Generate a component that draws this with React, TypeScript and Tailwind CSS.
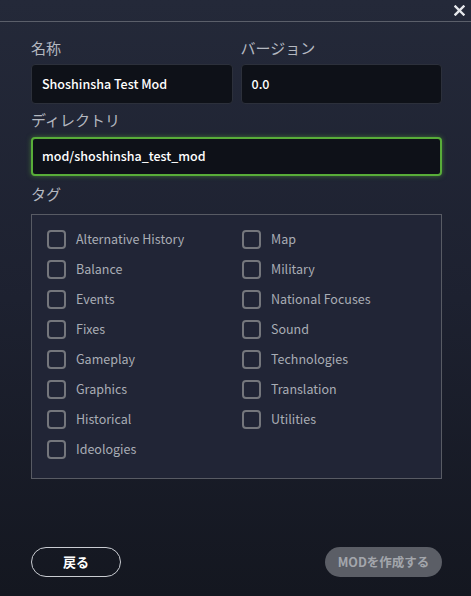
import React from "react";

const left = ["Alternative History", "Balance", "Events", "Fixes", "Gameplay", "Graphics", "Historical", "Ideologies"];
const right = ["Map", "Military", "National Focuses", "Sound", "Technologies", "Translation", "Utilities"];

function Tag({ label }: { label: string }) {
  return (
    <div className="flex items-center h-[30px]">
      <div className="w-[19px] h-[19px] rounded-[4px] border-2 border-[#74767c] shrink-0" />
      <span className="ml-[10px] text-[12.5px] text-[#a9adb5] leading-none">{label}</span>
    </div>
  );
}

export default function App() {
  return (
    <div
      className="w-[471px] h-[596px] relative overflow-hidden bg-[linear-gradient(180deg,#242939_0%,#1d2130_50%,#141720_100%)]"
      style={{ fontFamily: '"Noto Sans CJK JP", "Noto Sans", sans-serif' }}
    >
      <div className="h-[22px] border-b border-[#5b5f6a] flex justify-end items-center pr-[6px]">
        <svg width="11" height="11" viewBox="0 0 11 11">
          <path d="M1.5 1.5 L9.5 9.5 M9.5 1.5 L1.5 9.5" stroke="#e6e8ec" strokeWidth="2.4" strokeLinecap="square" />
        </svg>
      </div>
      <div className="pl-[31px] pr-[29px] pt-[14px] flex flex-col">
        <div className="flex gap-[8px]">
          <div className="flex-1 flex flex-col">
            <div className="text-[15px] text-[#b4b8c0] h-[23px] leading-[23px]">名称</div>
            <div className="mt-[5px] h-[40px] rounded-[4px] bg-[#0e1118] border border-[#2c303b] flex items-center pl-[10px] text-[12.5px] font-medium text-white">
              Shoshinsha Test Mod
            </div>
          </div>
          <div className="flex-1 flex flex-col">
            <div className="text-[15px] text-[#b4b8c0] h-[23px] leading-[23px]">バージョン</div>
            <div className="mt-[5px] h-[40px] rounded-[4px] bg-[#0e1118] border border-[#2c303b] flex items-center pl-[10px] text-[12.5px] font-medium text-white">
              0.0
            </div>
          </div>
        </div>
        <div className="mt-[4px] text-[15px] text-[#b4b8c0] h-[23px] leading-[23px]">ディレクトリ</div>
        <div className="mt-[6px] h-[39px] rounded-[4px] bg-[#0e1118] border-2 border-[#58ad39] shadow-[0_0_5px_rgba(88,173,57,0.55)] flex items-center pl-[9px] text-[12.5px] font-medium text-white">
          mod/shoshinsha_test_mod
        </div>
        <div className="mt-[6px] text-[15px] text-[#b4b8c0] h-[23px] leading-[23px]">タグ</div>
        <div className="mt-[9px] h-[265px] border border-[#585b64] bg-[#212536] pt-[9px] pl-[15px] flex">
          <div className="w-[195px] flex flex-col">
            {left.map((l) => (
              <Tag key={l} label={l} />
            ))}
          </div>
          <div className="flex flex-col">
            {right.map((l) => (
              <Tag key={l} label={l} />
            ))}
          </div>
        </div>
        <div className="mt-[68px] flex justify-between">
          <div className="w-[90px] h-[30px] rounded-full border border-[#c9ccd2] flex items-center justify-center text-[13px] font-bold text-white">
            戻る
          </div>
          <div className="w-[117px] h-[30px] rounded-full bg-[#5b5e66] flex items-center justify-center text-[12.5px] font-bold text-[#a3a6ac]">
            MODを作成する
          </div>
        </div>
      </div>
    </div>
  );
}
